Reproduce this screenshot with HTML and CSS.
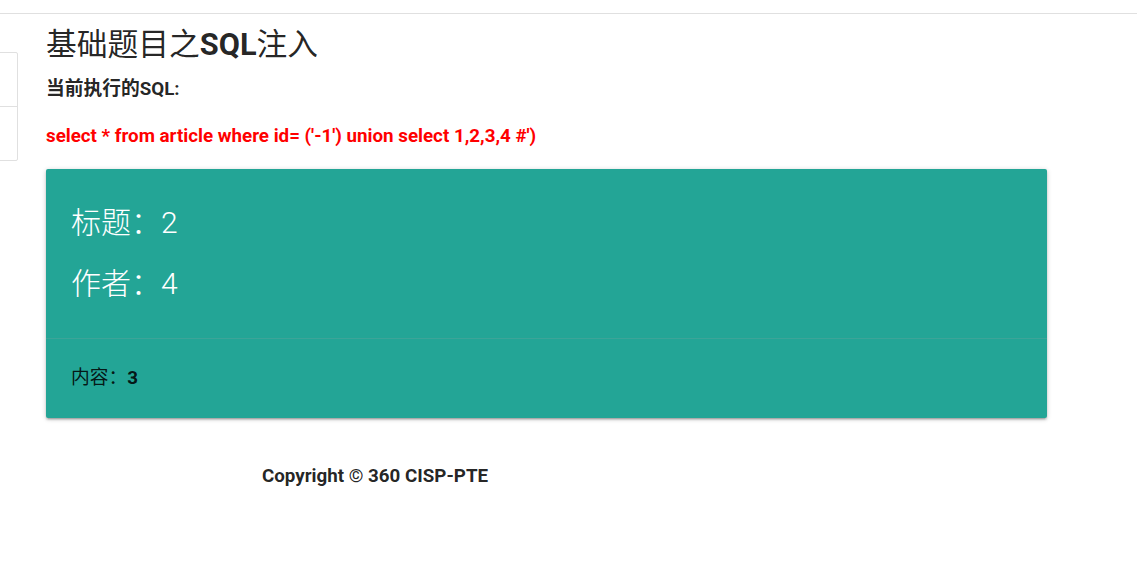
FILE: index.html
```html
<!DOCTYPE html>
<html lang="zh-CN">
<head>
<meta charset="utf-8">
<title>基础题目之SQL注入</title>
<link rel="stylesheet" href="styles.css">
</head>
<body>
<div class="topbar"></div>
<div class="layout">
  <aside class="sidenav">
    <div class="side-item"></div>
    <div class="side-item"></div>
  </aside>
  <main class="main">
    <h1 class="page-title">基础题目之<b>SQL</b>注入</h1>
    <p class="sql-label">当前执行的SQL:</p>
    <p class="sql-text">select * from article where id= ('-1') union select 1,2,3,4 #')</p>
    <div class="card">
      <div class="card-content">
        <div class="card-title">标题：2</div>
        <div class="card-title">作者：4</div>
      </div>
      <div class="card-action">内容：<b>3</b></div>
    </div>
    <footer class="footer">Copyright © 360 CISP-PTE</footer>
  </main>
</div>
</body>
</html>
```
FILE: styles.css
```css
html, body {
  margin: 0;
  padding: 0;
  background: #ffffff;
}
body {
  font-family: Roboto, "Noto Sans CJK SC", sans-serif;
  color: rgba(0, 0, 0, 0.87);
  line-height: 1.5;
}
.topbar {
  height: 13px;
  border-bottom: 1px solid #e0e0e0;
}
.layout {
  display: flex;
  align-items: flex-start;
}
.sidenav {
  width: 100px;
  margin-left: -84px;
  margin-top: 38px;
  border: 1px solid #e0e0e0;
  border-radius: 2px;
  flex: none;
}
.side-item {
  height: 53px;
}
.side-item + .side-item {
  border-top: 1px solid #e0e0e0;
}
.main {
  margin-left: 28px;
  width: 1001px;
}
.page-title {
  font-size: 30.75px;
  font-weight: 400;
  line-height: 45px;
  margin: 8px 0 0 0;
}
.page-title b {
  font-weight: 700;
}
.sql-label {
  font-size: 18.75px;
  font-weight: 700;
  line-height: 27px;
  margin: 9px 0 0 0;
}
.sql-text {
  font-size: 18.75px;
  font-weight: 700;
  color: #ff0000;
  line-height: 27px;
  margin: 20px 0 0 0;
}
.card {
  margin-top: 19px;
  background: #23a596;
  border-radius: 2px;
  box-shadow: 0 2px 2px 0 rgba(0,0,0,0.14), 0 3px 1px -2px rgba(0,0,0,0.12), 0 1px 5px 0 rgba(0,0,0,0.2);
}
.card-content {
  padding: 25px 24px 25px 25px;
  display: flex;
  flex-direction: column;
  gap: 3px;
}
.card-title {
  color: #ffffff;
  font-size: 30px;
  font-weight: 300;
  line-height: 58px;
}
.card-action {
  border-top: 1px solid rgba(160, 160, 160, 0.2);
  padding: 24px 25px 25px;
  font-size: 18.75px;
  line-height: 30px;
  color: rgba(0, 0, 0, 0.87);
}
.card-action b {
  font-weight: 700;
}
.footer {
  width: 658px;
  text-align: center;
  margin-top: 45px;
  font-size: 18.75px;
  font-weight: 700;
  line-height: 27px;
}
```
